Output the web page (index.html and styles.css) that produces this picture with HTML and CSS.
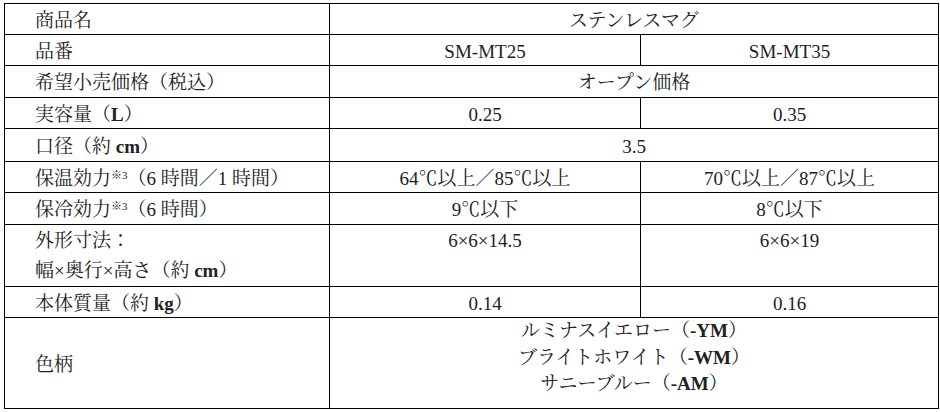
FILE: index.html
```html
<!DOCTYPE html>
<html lang="ja">
<head>
<meta charset="utf-8">
<title>ステンレスマグ 仕様</title>
<link rel="stylesheet" href="styles.css">
</head>
<body>
<table class="spec">
  <colgroup>
    <col class="c-label">
    <col class="c-a">
    <col class="c-b">
  </colgroup>
  <tr class="r31"><th>商品名</th><td colspan="2">ステンレスマグ</td></tr>
  <tr class="r31"><th>品番</th><td>SM-MT25</td><td>SM-MT35</td></tr>
  <tr class="r32"><th>希望小売価格（税込）</th><td colspan="2">オープン価格</td></tr>
  <tr class="r31"><th>実容量（<b>L</b>）</th><td>0.25</td><td>0.35</td></tr>
  <tr class="r33"><th>口径（約 <b>cm</b>）</th><td colspan="2">3.5</td></tr>
  <tr class="r31"><th>保温効力<sup>※3</sup>（6 時間／1 時間）</th><td>64℃以上／85℃以上</td><td>70℃以上／87℃以上</td></tr>
  <tr class="r32"><th>保冷効力<sup>※3</sup>（6 時間）</th><td>9℃以下</td><td>8℃以下</td></tr>
  <tr class="r62 top"><th>外形寸法：<br>幅×奥行×高さ（約 <b>cm</b>）</th><td>6×6×14.5</td><td>6×6×19</td></tr>
  <tr class="r31"><th>本体質量（約 <b>kg</b>）</th><td>0.14</td><td>0.16</td></tr>
  <tr class="r91"><th>色柄</th><td colspan="2" class="colors">ルミナスイエロー（<b>-YM</b>）<br>ブライトホワイト（<b>-WM</b>）<br>サニーブルー（<b>-AM</b>）</td></tr>
</table>
</body>
</html>
```

FILE: styles.css
```css
html, body {
  margin: 0;
  padding: 0;
  background: #ffffff;
}

body {
  padding: 3px 0 0 4px;
  font-family: "Liberation Serif", "Noto Serif CJK JP", "Noto Sans CJK JP", serif;
  color: #222222;
}

.spec {
  border-collapse: collapse;
  table-layout: fixed;
  width: 934px;
  font-size: 19px;
}

.c-label { width: 325px; }
.c-a { width: 311px; }
.c-b { width: 298px; }

.spec th,
.spec td {
  border: 1px solid #000;
  padding: 3px 0 0 0;
  line-height: 26px;
  vertical-align: middle;
  white-space: nowrap;
}

.spec th {
  font-weight: normal;
  text-align: left;
  padding-left: 30px;
}

.spec td {
  text-align: center;
}

.spec b {
  font-weight: bold;
}

.spec sup {
  font-size: 11px;
  line-height: 0;
  vertical-align: 6px;
}

.r31 { height: 31px; }
.r32 { height: 32px; }
.r33 { height: 33px; }
.r62 { height: 62px; }
.r91 { height: 91px; }

.spec .top th,
.spec .top td {
  vertical-align: top;
  padding-top: 1px;
  line-height: 30px;
}

.spec th.colors,
.spec td.colors {
  vertical-align: top;
  padding-top: 0;
  line-height: 26.5px;
}
```
